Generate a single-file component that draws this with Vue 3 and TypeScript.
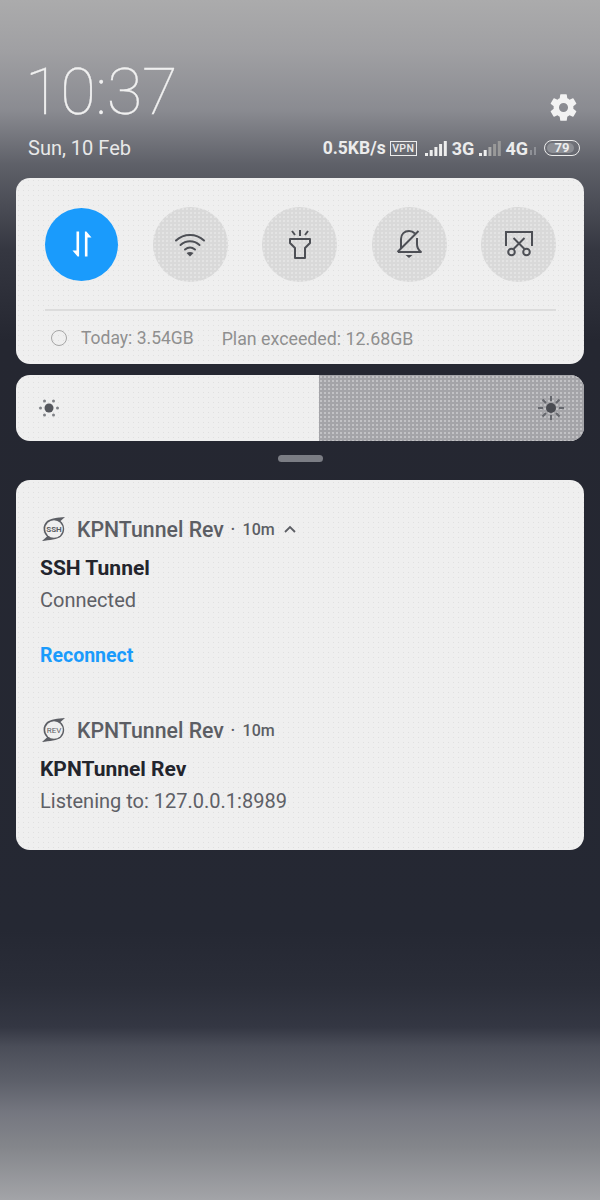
<script setup lang="ts">
const toggles = [
  { name: 'wifi' },
  { name: 'torch' },
  { name: 'bell' },
  { name: 'shot' },
];
</script>

<template>
  <div class="screen">
    <header class="head">
      <div class="clock">
        <div class="time">10:37</div>
        <div class="date">Sun, 10 Feb</div>
      </div>
      <div class="head-right">
        <svg class="gear" width="33" height="33" viewBox="0 0 24 24">
          <path fill="#f2f2f2" d="M19.14 12.94c.04-.3.06-.61.06-.94s-.02-.64-.07-.94l2.03-1.58a.49.49 0 0 0 .12-.61l-1.92-3.32a.49.49 0 0 0-.59-.22l-2.39.96a7 7 0 0 0-1.62-.94l-.36-2.54a.48.48 0 0 0-.48-.41h-3.84a.47.47 0 0 0-.47.41l-.36 2.54c-.59.24-1.13.57-1.62.94l-2.39-.96a.48.48 0 0 0-.59.22L2.74 8.87a.47.47 0 0 0 .12.61l2.03 1.58c-.05.3-.09.63-.09.94s.02.64.07.94l-2.03 1.58a.49.49 0 0 0-.12.61l1.92 3.32c.12.22.37.29.59.22l2.39-.96c.5.38 1.03.7 1.62.94l.36 2.54c.05.24.24.41.48.41h3.84c.24 0 .44-.17.47-.41l.36-2.54a7 7 0 0 0 1.62-.94l2.39.96c.22.08.47 0 .59-.22l1.92-3.32a.47.47 0 0 0-.12-.61zM12 15.3a3.3 3.3 0 1 1 0-6.6 3.3 3.3 0 0 1 0 6.6z" />
        </svg>
        <div class="status">
          <span class="speed">0.5KB/s</span>
          <span class="vpn">VPN</span>
          <svg class="bars" width="22" height="17" viewBox="0 0 22 17">
            <rect x="0" y="13" width="3" height="3" fill="#eee" />
            <rect x="4.700" y="10" width="3" height="6" fill="#eee" />
            <rect x="9.400" y="7" width="3" height="9" fill="#eee" />
            <rect x="14.100" y="4" width="3" height="12" fill="#eee" />
            <rect x="18.800" y="1" width="3" height="15" fill="#eee" />
          </svg>
          <span class="net">3G</span>
          <svg class="bars" width="22" height="17" viewBox="0 0 22 17">
            <rect x="0" y="13" width="3" height="3" fill="#eee" />
            <rect x="4.700" y="10" width="3" height="6" fill="#eee" />
            <rect x="9.400" y="7" width="3" height="9" fill="#aaa" />
            <rect x="14.100" y="4" width="3" height="12" fill="#999" />
            <rect x="18.800" y="1" width="3" height="15" fill="#999" />
          </svg>
          <span class="net last">4G</span>
          <svg class="updown" width="7" height="10" viewBox="0 0 7 10">
            <rect x="0" y="5" width="2" height="5" fill="#8f9197" />
            <rect x="4" y="2" width="2" height="8" fill="#8f9197" />
          </svg>
          <span class="battery"><span class="level"></span><span class="pct">79</span></span>
        </div>
      </div>
    </header>

    <section class="card quick">
      <div class="toggles">
        <div class="toggle on">
          <svg width="30" height="30" viewBox="0 0 30 30" fill="#fff">
            <path d="M9.500 2.500h2.600v25h-1.500L5.500 21.500H9.500z" />
            <path d="M20.500 27.500h-2.600v-25h1.500l5.100 6h-4z" />
          </svg>
        </div>
        <div v-for="t in toggles" :key="t.name" class="toggle">
          <svg v-if="t.name === 'wifi'" width="32" height="32" viewBox="0 0 32 32" fill="none" stroke="#4d4f55" stroke-width="2" stroke-linecap="round">
            <path d="M2 12.500c8-7.500 20-7.500 28 0" />
            <path d="M6.500 17c5.500-5 13.500-5 19 0" />
            <path d="M11 21.500c3-2.500 7-2.500 10 0" />
            <path d="M16 28.500l-3.500-3.500c2-1.500 5-1.500 7 0z" fill="#4d4f55" stroke="none" />
          </svg>
          <svg v-else-if="t.name === 'torch'" width="32" height="36" viewBox="0 0 32 36" fill="none" stroke="#4d4f55" stroke-width="2">
            <path d="M6 13h20v4l-5 5v10H11V22l-5-5z" stroke-linejoin="round" />
            <path d="M16 4v6M8 5l3 4M24 5l-3 4" />
          </svg>
          <svg v-else-if="t.name === 'bell'" width="34" height="36" viewBox="0 0 34 36" fill="none" stroke="#4d4f55" stroke-width="2">
            <path d="M9 22V13c0-5 3.500-8 8-8 2.500 0 4.500 1 6 2.500" />
            <path d="M25 12v6c0 3.500 1.500 6 4 8H6" stroke-linejoin="round" />
            <path d="M26.500 5L5.500 26" />
            <path d="M13.500 29h7l-3.500 3z" fill="#4d4f55" stroke="none" />
          </svg>
          <svg v-else width="32" height="32" viewBox="0 0 32 32" fill="none" stroke="#4d4f55" stroke-width="2">
            <path d="M3 18V4h26v14" />
            <path d="M10.500 21L21.500 10M21.500 21L10.500 10" />
            <circle cx="8.500" cy="24" r="3.300" />
            <circle cx="23.500" cy="24" r="3.300" />
          </svg>
        </div>
      </div>
      <div class="usage">
        <span class="ring"></span>
        <span class="today">Today: 3.54GB</span>
        <span class="plan">Plan exceeded: 12.68GB</span>
      </div>
    </section>

    <section class="card bright">
      <div class="bright-fill">
        <svg width="24" height="24" viewBox="0 0 24 24" fill="#808287">
          <circle cx="12" cy="12" r="4.500" fill="#55575d" />
          <circle cx="3.500" cy="12" r="1.500" />
          <circle cx="20.500" cy="12" r="1.500" />
          <circle cx="7.500" cy="5" r="1.500" />
          <circle cx="16.500" cy="5" r="1.500" />
          <circle cx="7.500" cy="19" r="1.500" />
          <circle cx="16.500" cy="19" r="1.500" />
        </svg>
      </div>
      <div class="bright-rest">
        <svg width="28" height="28" viewBox="0 0 28 28" stroke="#66686e" stroke-width="2">
          <circle cx="14" cy="14" r="5" fill="#4a4c52" stroke="none" />
          <path d="M14 2v5M14 21v5M1 14h5M22 14h5M5.500 5.500L9 9M22.500 5.500L19 9M5.500 22.500L9 19M22.500 22.500L19 19" />
        </svg>
      </div>
    </section>

    <div class="handle"></div>

    <section class="card notes">
      <article class="note first">
        <div class="app-row">
          <svg class="logo" width="26" height="26" viewBox="0 0 26 26">
            <path fill="#5c5e64" d="M24 1L19.500 5A10.500 10.500 0 0 1 20 20.500C17 23.500 8 24 1 25L6 20.500A10.500 10.500 0 0 1 6 5C9 2.500 17 1.500 24 1z" />
            <circle cx="13" cy="13" r="8.800" fill="#efefef" />
            <text x="13" y="16" text-anchor="middle" class="logo-text">SSH</text>
          </svg>
          <span class="app-name">KPNTunnel Rev</span>
          <span class="dot">•</span>
          <span class="ago">10m</span>
          <svg class="chev" width="14" height="9" viewBox="0 0 14 9" fill="none" stroke="#5c5e64" stroke-width="1.800">
            <path d="M2 7l5-5 5 5" />
          </svg>
        </div>
        <div class="title">SSH Tunnel</div>
        <div class="body">Connected</div>
        <div class="action">Reconnect</div>
      </article>
      <article class="note">
        <div class="app-row">
          <svg class="logo" width="26" height="26" viewBox="0 0 26 26">
            <path fill="#5c5e64" d="M24 1L19.500 5A10.500 10.500 0 0 1 20 20.500C17 23.500 8 24 1 25L6 20.500A10.500 10.500 0 0 1 6 5C9 2.500 17 1.500 24 1z" />
            <circle cx="13" cy="13" r="8.800" fill="#efefef" />
            <text x="13" y="16" text-anchor="middle" class="logo-text thin">REV</text>
          </svg>
          <span class="app-name">KPNTunnel Rev</span>
          <span class="dot">•</span>
          <span class="ago">10m</span>
        </div>
        <div class="title">KPNTunnel Rev</div>
        <div class="body">Listening to: 127.0.0.1:8989</div>
      </article>
    </section>
  </div>
</template>

<style scoped>
.screen {
  width: 600px;
  height: 1200px;
  overflow: hidden;
  box-sizing: border-box;
  padding: 0 16px;
  font-family: Roboto, "Liberation Sans", sans-serif;
  background: linear-gradient(
    to bottom,
    #ababac 0,
    #a0a0a3 50px,
    #8a8b91 110px,
    #5e6068 165px,
    #353741 250px,
    #252731 340px,
    #252833 930px,
    #2a2d38 985px,
    #343743 1027px,
    #4b4e59 1047px,
    #5c5f69 1080px,
    #757780 1113px,
    #84868b 1147px,
    #a3a4a8 1200px
  );
}
.head {
  height: 178px;
  display: flex;
  justify-content: space-between;
  align-items: flex-end;
  box-sizing: border-box;
  padding: 0 0 18px 11px;
  color: #f0f0f0;
}
.time {
  font-size: 65px;
  line-height: 65px;
  font-weight: 100;
  letter-spacing: -0.3px;
  -webkit-text-stroke: 0.3px #f0f0f0;
  margin-left: -2px;
  position: relative;
  top: 1px;
}
.date {
  font-size: 20px;
  line-height: 24px;
  margin: 12px 0 0 1px;
  color: #e8e8e8;
}
.head-right {
  display: flex;
  flex-direction: column;
  align-items: flex-end;
}
.gear {
  margin: 0 4px 12px 0;
}
.status {
  display: flex;
  align-items: center;
  height: 24px;
  color: #ececec;
  font-weight: 700;
  font-size: 18px;
  margin-right: 4px;
}
.speed {
  font-size: 17.500px;
  margin-right: 4px;
}
.vpn {
  border: 1.500px solid #ececec;
  font-size: 10.500px;
  line-height: 13px;
  padding: 0 1.500px;
  font-weight: 500;
  letter-spacing: 0.4px;
  margin-right: 8px;
}
.net {
  margin: 0 5px;
}
.net.last {
  margin-left: 4px;
}
.updown {
  margin: 4px 7px 0 -3px;
}
.battery {
  position: relative;
  width: 34px;
  height: 14px;
  border: 1.500px solid #ececec;
  border-radius: 9px;
  font-size: 13px;
  line-height: 14px;
  text-align: center;
  overflow: hidden;
}
.level {
  position: absolute;
  left: 2px;
  top: 2px;
  bottom: 2px;
  width: 79%;
  background: #8d8f95;
  border-radius: 6px;
}
.pct {
  position: relative;
}
.card {
  background-color: #efefef;
  background-image: radial-gradient(circle, rgba(190, 190, 190, 0.28) 0.6px, transparent 1px);
  background-size: 5px 5px;
  border-radius: 14px;
}
.quick {
  height: 186px;
  box-sizing: border-box;
  padding: 29px 28px 0 29px;
}
.toggles {
  display: flex;
  justify-content: space-between;
  align-items: center;
  height: 74px;
  padding-bottom: 28px;
  border-bottom: 2px solid #dcdcdc;
}
.toggle {
  width: 75px;
  height: 75px;
  border-radius: 50%;
  background-color: #d9d9d9;
  background-image: radial-gradient(circle, rgba(255, 255, 255, 0.4) 0.6px, transparent 1px);
  background-size: 4px 4px;
  display: flex;
  align-items: center;
  justify-content: center;
}
.toggle.on {
  background: #1a9bfc;
  width: 73px;
  height: 73px;
}
.usage {
  display: flex;
  align-items: center;
  height: 54px;
  color: #8f8f8f;
  font-size: 17.500px;
}
.plan {
  font-size: 17.800px;
}
.ring {
  width: 14px;
  height: 14px;
  border: 1px solid #a5a5a5;
  border-radius: 50%;
  margin: 0 14px 0 6px;
}
.today {
  margin-right: 28px;
}
.bright {
  height: 66px;
  margin-top: 11px;
  display: flex;
  overflow: hidden;
}
.bright-fill {
  box-sizing: border-box;
  width: 303px;
  padding-left: 21px;
  display: flex;
  align-items: center;
}
.bright-rest {
  flex: 1;
  background-color: #a4a4a8;
  background-image: radial-gradient(circle, rgba(255, 255, 255, 0.45) 0.6px, transparent 1px);
  background-size: 4px 4px;
  display: flex;
  align-items: center;
  justify-content: flex-end;
  padding-right: 19px;
}
.handle {
  width: 45px;
  height: 7px;
  border-radius: 4px;
  background: #7b7d84;
  margin: 14px auto 18px;
}
.notes {
  height: 370px;
  box-sizing: border-box;
  padding: 35px 24px 0;
}
.note.first {
  height: 201px;
}
.app-row {
  display: flex;
  align-items: center;
  height: 28px;
  color: #5c5e64;
}
.logo {
  margin: 0 10px 0 1px;
}
.logo-text {
  font-size: 8px;
  font-weight: 700;
  fill: #5c5e64;
  font-family: Roboto, sans-serif;
}
.logo-text.thin {
  font-weight: 400;
}
.app-name {
  font-size: 21.300px;
  font-weight: 500;
}
.dot {
  font-size: 11px;
  margin: 0 6px 0 7px;
}
.ago {
  font-size: 16px;
  font-weight: 500;
  margin-left: 2px;
}
.chev {
  margin-left: 8px;
}
.title {
  font-size: 21px;
  font-weight: 700;
  color: #23252d;
  margin-top: 12px;
  line-height: 26px;
}
.body {
  font-size: 20px;
  color: #5e6066;
  margin-top: 7px;
  line-height: 24px;
}
.action {
  font-size: 19.500px;
  font-weight: 700;
  color: #1a9bfc;
  margin-top: 33px;
  line-height: 22px;
}
</style>

<style>
html, body {
  margin: 0;
  background: #252731;
}
</style>
